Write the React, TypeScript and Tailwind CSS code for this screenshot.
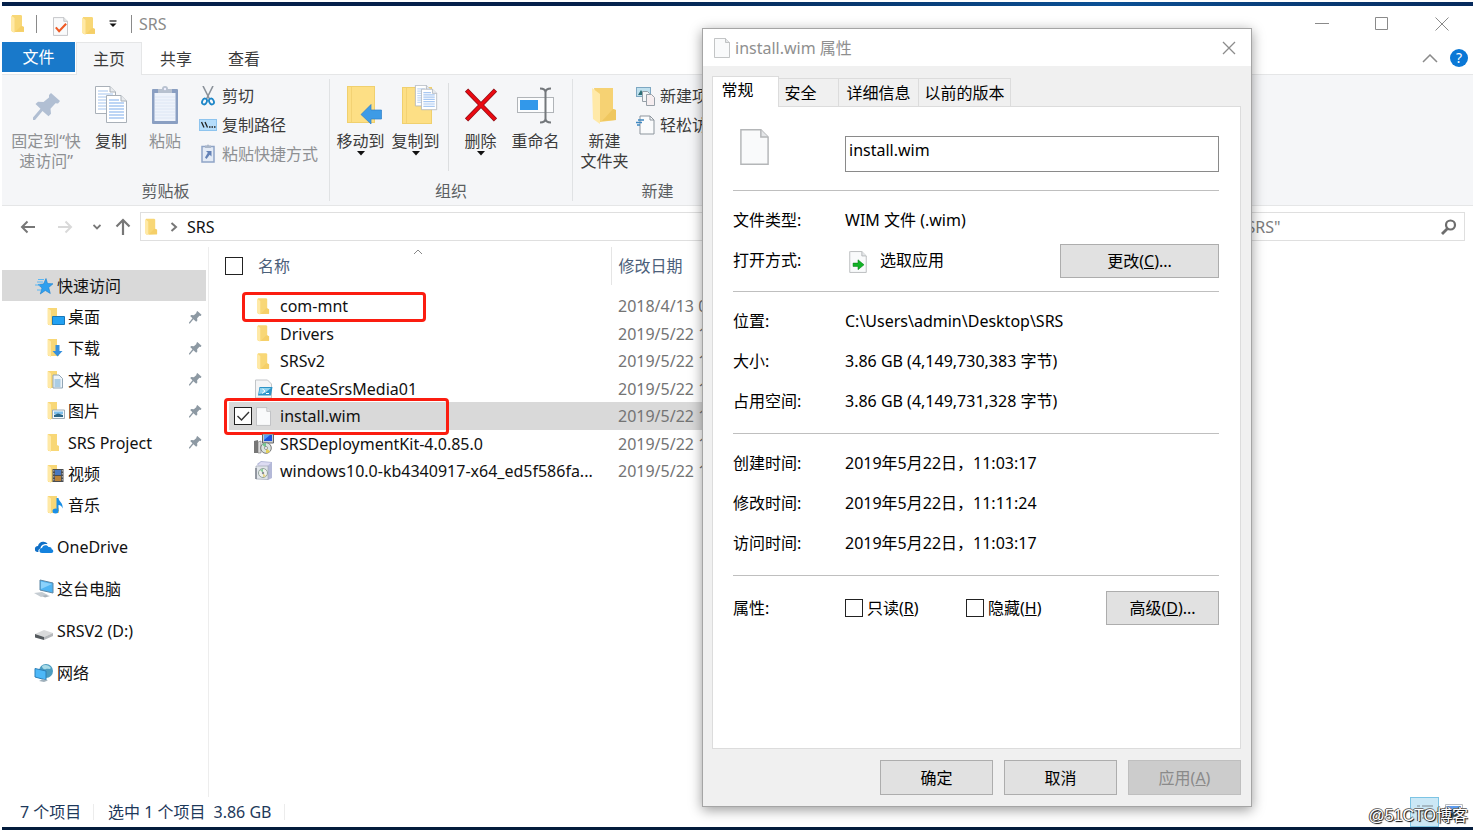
import React from "react";

type P = { className?: string; children?: React.ReactNode };

function Folder({ className = "" }: { className?: string }) {
  return (
    <svg className={className} viewBox="0 0 14 18" aria-hidden="true">
      <path d="M1 0h9l1 .8V11l2 1v5H1z" fill="#f8d776" />
      <path d="M10 11l3 1v4.500l-9 .5z" fill="#f5cf68" />
      <path d="M0 .5l3.500 2.500V18L0 16z" fill="#ffe9a6" />
    </svg>
  );
}

function Page({ className = "", children }: P) {
  return (
    <svg className={className} viewBox="0 0 16 20" aria-hidden="true">
      <path d="M1 .5h10.500L15.500 4.500V19.500H.5V.5z" fill="#f9fafb" stroke="#b4b6b8" strokeWidth=".8" />
      <path d="M11.500.5v4h4" fill="#e4e6e8" stroke="#b4b6b8" strokeWidth=".8" />
      {children}
    </svg>
  );
}

function Pin({ className = "" }: { className?: string }) {
  return (
    <svg className={className} viewBox="0 0 28 28" aria-hidden="true">
      <path
        d="M18 0l9 8-2 2.500-2.500-.3-5 5.500.5 5-2.500 2.500-6-5.200L2 27H0v-2.500l7.500-8.800L2.500 11 5 8.800l5.500.2L16 4.500 16 2z"
        fill="currentColor"
      />
    </svg>
  );
}

function Doc({ x, y, c }: { x: number; y: number; c: string }) {
  return (
    <g transform={`translate(${x} ${y})`}>
      <path d="M.5.5H15L20.500 6V27.500H.5z" fill="#fff" stroke="#a9b0b8" />
      <path d="M3 5h10M3 8h15M3 11h15M3 14h15M3 17h15M3 20h15M3 23h15" stroke={c} strokeWidth="1.600" />
      <path d="M15 .5V6h5.500" fill="#e8ebee" stroke="#a9b0b8" />
    </g>
  );
}

function CopyIcon() {
  return (
    <svg className="h-10 w-8" viewBox="0 0 32 38" aria-hidden="true">
      <Doc x={0} y={0} c="#c3d9f5" />
      <Doc x={11} y={9} c="#a8c8f2" />
    </svg>
  );
}

function PasteIcon() {
  return (
    <svg className="h-10 w-7" viewBox="0 0 28 40" aria-hidden="true">
      <rect x="1" y="4" width="26" height="35" rx="1" fill="#8a9fc2" />
      <rect x="3.500" y="8" width="21" height="28" fill="#eef3fb" />
      <path d="M4 12h20M4 15h20M4 18h20M4 21h20M4 24h20M4 27h20M4 30h20M4 33h20" stroke="#dde6f4" />
      <path d="M7 4h4a3 3 0 0 1 6 0h4v4H7z" fill="#b7c1cf" />
      <circle cx="14" cy="4" r="1.200" fill="#eef" />
    </svg>
  );
}

function ScissorsIcon() {
  return (
    <svg className="h-5 w-4" viewBox="0 0 14 20" aria-hidden="true">
      <path d="M2 0l6.500 13M12 0L5.500 13" stroke="#8b929a" strokeWidth="1.600" fill="none" />
      <ellipse cx="3.500" cy="15.500" rx="2.300" ry="3" fill="none" stroke="#1d86c8" strokeWidth="1.800" transform="rotate(25 3.500 15.500)" />
      <ellipse cx="10.500" cy="15.500" rx="2.300" ry="3" fill="none" stroke="#1d86c8" strokeWidth="1.800" transform="rotate(-25 10.500 15.500)" />
    </svg>
  );
}

function PathIcon() {
  return (
    <svg className="h-3 w-[18px]" viewBox="0 0 18 12" aria-hidden="true">
      <rect x=".5" y=".5" width="17" height="11" fill="#b5dcfb" stroke="#8ec4ee" />
      <path d="M2.500 3l2.500 5.500M6 3l2.500 5.500" stroke="#222" strokeWidth="1.300" />
      <path d="M10 8h1.500M12.500 8H14M15 8h1.500" stroke="#222" strokeWidth="1.500" />
    </svg>
  );
}

function ShortcutIcon() {
  return (
    <svg className="h-[19px] w-4" viewBox="0 0 16 19" aria-hidden="true">
      <rect x="2" y="2.500" width="12" height="15.500" fill="#e4ebf6" stroke="#8fa4c6" strokeWidth="1.500" />
      <path d="M5 3V1.500h2a1 1 0 0 1 2 0h2V4H5z" fill="#a9b6c9" />
      <path d="M6 7h5.500v5.500L9.700 10.700 6.500 15 5 13.500 7.800 8.800z" fill="#6482b6" />
    </svg>
  );
}

function MoveToIcon() {
  return (
    <svg className="h-10 w-9" viewBox="0 0 36 40" aria-hidden="true">
      <rect x="0.500" y="1.500" width="27" height="36" fill="#fddf85" stroke="#f0d06e" />
      <path d="M4.500 2v35" stroke="#f3d273" />
      <path d="M14 29.500L24 19.500v5.500h10.500v9H24V39z" fill="#3e9be6" stroke="#2f80c8" strokeWidth=".7" />
    </svg>
  );
}

function CopyToIcon() {
  return (
    <svg className="h-10 w-9" viewBox="0 0 36 40" aria-hidden="true">
      <rect x="0.500" y="2.500" width="29" height="36" fill="#fddf85" stroke="#f0d06e" />
      <path d="M4.500 3v35" stroke="#f3d273" />
      <g transform="translate(13 0) scale(.76)">
        <Doc x={0} y={0} c="#c3d9f5" />
        <Doc x={8} y={5} c="#a8c8f2" />
      </g>
    </svg>
  );
}

function DeleteIcon() {
  return (
    <svg className="h-10 w-8" viewBox="0 0 32 40" aria-hidden="true">
      <path d="M1.500 5L30.500 35M30.500 5L1.500 35" stroke="#8f1018" strokeWidth="4.600" />
      <path d="M2 5.500l28 29M30 5.500l-28 29" stroke="#ea0a12" strokeWidth="3.200" />
    </svg>
  );
}

function RenameIcon() {
  return (
    <svg className="h-10 w-[38px]" viewBox="0 0 38 40" aria-hidden="true">
      <rect x=".5" y="12.500" width="36" height="15" fill="#fbfcfd" stroke="#b0b4b8" />
      <rect x="3" y="15" width="18" height="10" fill="#3298ea" />
      <path d="M23 3.500c4 0 5.500 1 5.500 4v26c0 3-1.500 4-5.500 4M34 3.500c-4 0-5.500 1-5.500 4v26c0 3 1.500 4 5.500 4" fill="none" stroke="#73777b" strokeWidth="2" />
    </svg>
  );
}

function NewFolderIcon() {
  return (
    <svg className="h-10 w-7" viewBox="0 0 28 40" aria-hidden="true">
      <path d="M3 3h19v21l3 1v10l-16 2z" fill="#f6d273" />
      <path d="M22 24l3 1v10l-14 1z" fill="#efc75f" />
      <path d="M1 3l8 6v30l-7-5z" fill="#ffe9a8" />
    </svg>
  );
}

function NewItemIcon() {
  return (
    <svg className="h-5 w-5" viewBox="0 0 20 20" aria-hidden="true">
      <rect x=".5" y="1.500" width="14" height="9" fill="#bfe0ee" stroke="#7da7c2" />
      <path d="M2 9l3-5 3 5z" fill="#2d6f78" />
      <path d="M6.500 5.500h5l2 2v8h-7z" fill="#f4f6f8" stroke="#97a0a8" />
      <path d="M10.500 8.500h5l3 3v8h-8z" fill="#f6eef0" stroke="#97a0a8" />
    </svg>
  );
}

function EasyAccessIcon() {
  return (
    <svg className="h-5 w-5" viewBox="0 0 20 20" aria-hidden="true">
      <path d="M4 1h10l4 4v14H4z" fill="#fafbfc" stroke="#8d959d" />
      <path d="M14 1v4h4" fill="none" stroke="#8d959d" />
      <path d="M2 5h6M0 7.500h6M1 10h3" stroke="#3d86c0" strokeWidth="1.500" />
    </svg>
  );
}

const svgBox = "h-5 w-5 shrink-0";

function NavIcon({ kind }: { kind: string }) {
  if (kind === "star")
    return (
      <svg className={svgBox} viewBox="0 0 20 20" aria-hidden="true">
        <path d="M12 2.500l1.500 5 5.500.3-4.300 3.700 1.600 6-5-3-5 3.500L8 12 4 8.500l5.500-.5z" fill="#2fa0ef" stroke="#1b80cf" strokeWidth=".6" />
        <path d="M4 3.500h6M3 6h6M1 9h5M3 14h4" stroke="#5bb8f5" strokeWidth="1" />
      </svg>
    );
  if (kind === "cloud")
    return (
      <svg className={svgBox} viewBox="0 0 20 20" aria-hidden="true">
        <path d="M1 13c-.5-3 1-4 3-4 .5-3 3.500-5 6.500-4C12 5 13 6 13.500 7c-5-.5-7 2-7 4.500-2 .5-2.500 2-2 3.500C2.500 15 1 14.500 1 13z" fill="#0f6fc6" />
        <path d="M5.500 14c-.3-2 1-3 2.500-3 .5-3 5-4 6.500-1 2.500-.3 3.300 1 3.200 2.300 2.300.5 2 3.700-.2 3.700H8c-1.500 0-2.500-.8-2.500-2z" fill="#1482de" />
      </svg>
    );
  if (kind === "pc")
    return (
      <svg className={svgBox} viewBox="0 0 20 20" aria-hidden="true">
        <path d="M6 1l13 3v10L6 11z" fill="#4fb4f2" stroke="#5d87a5" />
        <path d="M7 2.500l11 2.500-11 5z" fill="#8bd2fb" />
        <path d="M0 14l8-1 6 3-7 2z" fill="#c5ccd2" />
        <path d="M8 17l4-1 4 1-5 1.500z" fill="#a9b2ba" />
      </svg>
    );
  if (kind === "drive")
    return (
      <svg className={svgBox} viewBox="0 0 20 20" aria-hidden="true">
        <path d="M1 13l9-4 9 3-9 4z" fill="#d9dadb" />
        <path d="M1 13l9 3v3l-9-2.500z" fill="#555a5e" />
        <path d="M10 16l9-4v3l-9 4z" fill="#b5b8bb" />
      </svg>
    );
  if (kind === "network")
    return (
      <svg className={svgBox} viewBox="0 0 20 20" aria-hidden="true">
        <circle cx="12" cy="8" r="7" fill="#4b9cc0" />
        <path d="M8 3c3-2 7-1 9 2-2 2-3 0-5 1S8 5 8 3z" fill="#a8dbe8" />
        <path d="M1 5.500l11 2.500v9L1 14z" fill="#4db8f8" stroke="#2b7fb8" />
        <path d="M5 18l4-2 5 1.500-4 1.500z" fill="#9fb0bb" />
      </svg>
    );
  return (
    <svg className={svgBox} viewBox="0 0 20 20" aria-hidden="true">
      <path d="M3 1h9v11l2 1v5H3z" fill="#f8d776" />
      <path d="M2.500 1L6 3.500V19l-3.500-2z" fill="#ffe9a6" />
      {kind === "desktop" && <path d="M7.500 9.500h12v8h-12z" fill="#23a1f2" stroke="#1877b8" />}
      {kind === "download" && <path d="M10.500 7h4v6h3L12.500 18.500 7.500 13h3z" fill="#3590dd" />}
      {kind === "docs" && (
        <>
          <path d="M8 5h6l3.500 3.500V18H8z" fill="#eef4f9" stroke="#91a5b5" />
          <path d="M9.500 10h6M9.500 12h6M9.500 14h6M9.500 16h6" stroke="#68a5cf" />
        </>
      )}
      {kind === "pics" && (
        <>
          <path d="M7.500 9h12v8.500h-12z" fill="#f5fafc" stroke="#a0acb5" />
          <path d="M9 10.500h9V13H9z" fill="#7fc0ec" />
          <path d="M9 16v-2l4-1.500 5 1.500v2z" fill="#2b6687" />
        </>
      )}
      {kind === "video" && (
        <>
          <path d="M7.500 5h11v13h-11z" fill="#4a4d50" />
          <path d="M10 6h6v5h-6z" fill="#4878c0" />
          <path d="M10 12h6v5h-6z" fill="#b98238" />
          <path d="M8.800 6v12M17.300 6v12" stroke="#bbb" strokeDasharray="1.500 1.500" />
        </>
      )}
      {kind === "music" && (
        <>
          <path d="M11.500 3h2c0 3.500 5 4.500 4 10.500-.5-2-2-3.500-4-3.500V16h-2z" fill="#1a8fe6" />
          <ellipse cx="10.500" cy="16" rx="3" ry="2.500" fill="#1a8fe6" />
        </>
      )}
    </svg>
  );
}

function FileIcon({ kind }: { kind: string }) {
  if (kind === "folder") return <Folder className="ml-[3px] h-[17px] w-[13px]" />;
  if (kind === "page") return <Page className="ml-0.5 h-[19px] w-[15px]" />;
  if (kind === "script")
    return (
      <svg className="h-5 w-5" viewBox="0 0 20 20" aria-hidden="true">
        <path d="M1.500 1h12l4 4v14h-16z" fill="#f4f5f6" stroke="#c2c5c8" />
        <path d="M5.500 8h13l-1.500 8.500H4z" fill="#2d93c6" />
        <path d="M6 9h11l-6 5-6 1z" fill="#8fd3ee" />
        <path d="M8.500 10l2.500 2-3 2.500M12 14.500h3" stroke="#fff" fill="none" />
      </svg>
    );
  if (kind === "installer")
    return (
      <svg className="h-5 w-5" viewBox="0 0 20 20" aria-hidden="true">
        <path d="M8.500 0h11v9h-11z" fill="#c6cbd0" stroke="#666" />
        <path d="M10 1h8v6h-8z" fill="#1b52dd" />
        <path d="M10 1h6l-6 5z" fill="#54a0ff" />
        <path d="M0 7l4-1v13H0z" fill="#777" />
        <path d="M4 8l3-1v12H4z" fill="#ddd" stroke="#777" strokeWidth=".6" />
        <circle cx="12" cy="14" r="5.300" fill="#dbe4df" stroke="#777" />
        <path d="M12 14L8 10.500A5 5 0 0 1 12 9z" fill="#74c58f" />
        <path d="M12 14l4 3.500A5 5 0 0 1 12 19z" fill="#e4cf58" />
        <circle cx="12" cy="14" r="1.500" fill="#fff" stroke="#777" strokeWidth=".7" />
      </svg>
    );
  return (
    <svg className="h-5 w-5" viewBox="0 0 20 20" aria-hidden="true">
      <path d="M3 3l4-3 11 1v16l-4 2z" fill="#b4b9d8" />
      <path d="M7 1l10 .8-3.500 3.200H3z" fill="#dddcf2" />
      <path d="M2 5h12v13.500L2 18z" fill="#e1e5ea" stroke="#a0a6b4" strokeWidth=".7" />
      <circle cx="9" cy="12" r="4.500" fill="#f0f2ee" stroke="#93a39c" />
      <path d="M9 12L6 9a4 4 0 0 1 3-1z" fill="#8ccc9a" />
      <path d="M9 12l3 3a4 4 0 0 1-3 1z" fill="#e6d58a" />
      <circle cx="9" cy="12" r="1.200" fill="#8a8f94" />
      <path d="M2 7v11" stroke="#7d838c" strokeWidth="1.500" />
    </svg>
  );
}

function BigButton({ icon, lines, width, dim, drop }: { icon: React.ReactNode; lines: string[]; width: string; dim?: boolean; drop?: boolean }) {
  return (
    <button className={`flex flex-col items-center whitespace-nowrap ${width} ${dim ? "text-[#8e9093]" : "text-[#3b3b3b]"}`}>
      <span className="flex h-[52px] items-center justify-center">{icon}</span>
      <span className="block leading-5">
        {lines.map((l) => (
          <span key={l} className="block">
            {l}
          </span>
        ))}
      </span>
      {drop && (
        <svg className="h-[5px] w-2" viewBox="0 0 8 5" aria-hidden="true">
          <path d="M0 0h8L4 4.500z" fill="#111" />
        </svg>
      )}
    </button>
  );
}

function SmallButton({ icon, label, dim }: { icon: React.ReactNode; label: string; dim?: boolean }) {
  return (
    <button className={`flex h-[29px] items-center gap-1 whitespace-nowrap ${dim ? "text-[#8e9093]" : "text-[#3b3b3b]"}`}>
      <span className="flex w-5 justify-center">{icon}</span>
      {label}
    </button>
  );
}

function Group({ label, className = "", children }: { label: string; className?: string; children: React.ReactNode }) {
  return (
    <section aria-label={label} className={`my-1 flex shrink-0 flex-col border-r border-[#e0e2e4] ${className}`}>
      <div className="flex flex-1 items-start">{children}</div>
      <div className="text-center leading-5 text-[#5b5e61]">{label}</div>
    </section>
  );
}

const quick = [
  { label: "桌面", kind: "desktop", pin: true },
  { label: "下载", kind: "download", pin: true },
  { label: "文档", kind: "docs", pin: true },
  { label: "图片", kind: "pics", pin: true },
  { label: "SRS Project", kind: "folder", pin: true },
  { label: "视频", kind: "video", pin: false },
  { label: "音乐", kind: "music", pin: false },
];

const roots = [
  { label: "OneDrive", kind: "cloud" },
  { label: "这台电脑", kind: "pc" },
  { label: "SRSV2 (D:)", kind: "drive" },
  { label: "网络", kind: "network" },
];

const files = [
  { name: "com-mnt", date: "2018/4/13 0", kind: "folder", mark: true },
  { name: "Drivers", date: "2019/5/22 1", kind: "folder" },
  { name: "SRSv2", date: "2019/5/22 1", kind: "folder" },
  { name: "CreateSrsMedia01", date: "2019/5/22 1", kind: "script" },
  { name: "install.wim", date: "2019/5/22 1", kind: "page", selected: true },
  { name: "SRSDeploymentKit-4.0.85.0", date: "2019/5/22 1", kind: "installer" },
  { name: "windows10.0-kb4340917-x64_ed5f586fa...", date: "2019/5/22 1", kind: "update" },
];

const checkboxBase = "block h-[18px] w-[18px] shrink-0 appearance-none border border-[#222] bg-white";

function Row({ label, children }: { label: string; children: React.ReactNode }) {
  return (
    <div className="flex h-10 items-center">
      <dt className="w-28 shrink-0">{label}</dt>
      <dd className="flex flex-1 items-center">{children}</dd>
    </div>
  );
}

const dlgButton = "border border-[#adadad] bg-[#e1e1e1] text-black";

function PropertiesDialog() {
  return (
    <div
      role="dialog"
      aria-label="install.wim 属性"
      className="absolute left-[702px] top-7 flex w-[550px] flex-col border border-[#a5a5a5] bg-[#f0f0f0] text-black shadow-[0_3px_12px_rgba(0,0,0,0.4)]"
    >
      <header className="flex h-[37px] items-center bg-white pl-[11px] pr-[13px] text-[#8f8f8f]">
        <Page className="h-5 w-4" />
        <h2 className="ml-[5px] flex-1">install.wim 属性</h2>
        <button aria-label="关闭" className="p-px">
          <svg className="h-4 w-4" viewBox="0 0 16 16" aria-hidden="true">
            <path d="M2 2l12 12M14 2L2 14" stroke="#8c8c8c" strokeWidth="1.300" />
          </svg>
        </button>
      </header>
      <div className="pl-[9px] pr-[10px] pt-[11px]">
        <div role="tablist" className="flex h-[29px] items-end">
          <button role="tab" aria-selected="true" className="relative -mb-px h-[31px] w-[67px] border border-b-0 border-[#dcdcdc] bg-white pb-1 pr-4 text-center">
            常规
          </button>
          <button role="tab" aria-selected="false" className="h-7 w-[60px] border-r border-t border-[#dcdcdc] pr-4 text-center">
            安全
          </button>
          <button role="tab" aria-selected="false" className="h-7 w-20 border-r border-t border-[#dcdcdc] text-center">
            详细信息
          </button>
          <button role="tab" aria-selected="false" className="h-7 w-[92px] border-r border-t border-[#dcdcdc] text-center">
            以前的版本
          </button>
        </div>
        <div role="tabpanel" className="h-[643px] border border-[#dcdcdc] bg-white pl-5 pr-[21px]">
          <div className="flex h-[83px] items-start">
            <div className="w-28 pl-[7px] pt-[21px]">
              <Page className="h-[38px] w-[29px]" />
            </div>
            <input
              aria-label="文件名"
              defaultValue="install.wim"
              className="mt-[29px] h-9 flex-1 border border-[#8a8a8a] bg-white pb-2 pl-[3px] outline-none"
            />
          </div>
          <dl className="border-t border-[#bfbfbf] pb-[11px] pt-[9px]">
            <Row label="文件类型:">WIM 文件 (.wim)</Row>
            <Row label="打开方式:">
              <Page className="ml-1 mt-1 h-[22px] w-[18px]">
                <path d="M3.500 11h4.500V8l5.500 4.500L8 17v-3H3.500z" fill="#12b426" stroke="#0a7d18" strokeWidth=".5" />
              </Page>
              <span className="ml-[13px] flex-1">选取应用</span>
              <button className={`mt-0.5 h-[34px] w-[159px] ${dlgButton}`}>
                更改(<u>C</u>)...
              </button>
            </Row>
          </dl>
          <dl className="border-t border-[#bfbfbf] pb-3 pt-[9px]">
            <Row label="位置:">C:\Users\admin\Desktop\SRS</Row>
            <Row label="大小:">3.86 GB (4,149,730,383 字节)</Row>
            <Row label="占用空间:">3.86 GB (4,149,731,328 字节)</Row>
          </dl>
          <dl className="border-t border-[#bfbfbf] pb-3 pt-[9px]">
            <Row label="创建时间:">2019年5月22日，11:03:17</Row>
            <Row label="修改时间:">2019年5月22日，11:11:24</Row>
            <Row label="访问时间:">2019年5月22日，11:03:17</Row>
          </dl>
          <dl className="border-t border-[#bfbfbf] pt-3">
            <Row label="属性:">
              <label className="flex w-[121px] items-center gap-1">
                <input type="checkbox" className={checkboxBase} />
                <span>
                  只读(<u>R</u>)
                </span>
              </label>
              <label className="flex flex-1 items-center gap-1">
                <input type="checkbox" className={checkboxBase} />
                <span>
                  隐藏(<u>H</u>)
                </span>
              </label>
              <button className={`h-[34px] w-[113px] ${dlgButton}`}>
                高级(<u>D</u>)...
              </button>
            </Row>
          </dl>
        </div>
      </div>
      <footer className="flex justify-end gap-[11px] px-[10px] pb-[11px] pt-[11px]">
        <button className={`h-[35px] w-[113px] ${dlgButton}`}>确定</button>
        <button className={`h-[35px] w-[113px] ${dlgButton}`}>取消</button>
        <button disabled className="h-[35px] w-[113px] border border-[#bfbfbf] bg-[#cccccc] text-[#8a8a8a]">
          应用(<u>A</u>)
        </button>
      </footer>
    </div>
  );
}

export default function App() {
  return (
    <div className="relative flex min-h-screen flex-col bg-white pb-1 pl-0.5 pr-[5px] pt-0.5 font-['Noto_Sans','Noto_Sans_CJK_SC',sans-serif] text-[16px] leading-6 text-[#111]">
      <div className="h-1 bg-linear-to-r from-[#04204a] from-40% via-[#0b5095] via-75% to-[#062a5c]" />
      <header className="flex h-9 items-center">
        <Folder className="ml-[9px] h-[18px] w-[14px]" />
        <span className="ml-[11px] h-[18px] w-px bg-[#8a8a8a]" />
        <Page className="ml-4 mt-1 h-[19px] w-[15px]">
          <path d="M3 11l3.500 4L14 7" fill="none" stroke="#ee5a24" strokeWidth="2.200" />
        </Page>
        <Folder className="ml-[14px] mt-1 h-[18px] w-[14px]" />
        <button aria-label="自定义快速访问工具栏" className="ml-[13px]">
          <svg className="h-2 w-2" viewBox="0 0 8 8" aria-hidden="true">
            <path d="M.5 1h7" stroke="#222" strokeWidth="1.300" />
            <path d="M.5 3.500h7L4 7z" fill="#111" />
          </svg>
        </button>
        <span className="ml-[14px] h-[18px] w-px bg-[#8a8a8a]" />
        <h1 className="ml-[7px] flex-1 text-[#8a8a8a]">SRS</h1>
        <div className="flex items-center gap-[46px] pr-6">
          <button aria-label="最小化">
            <svg className="h-[14px] w-[14px]" viewBox="0 0 14 14" aria-hidden="true">
              <path d="M0 6.500h14" stroke="#8a8a8a" />
            </svg>
          </button>
          <button aria-label="最大化">
            <svg className="h-[14px] w-[14px]" viewBox="0 0 14 14" aria-hidden="true">
              <path d="M.5.500h12v12H.5z" fill="none" stroke="#8a8a8a" />
            </svg>
          </button>
          <button aria-label="关闭">
            <svg className="h-[14px] w-[14px]" viewBox="0 0 14 14" aria-hidden="true">
              <path d="M.5.500l13 13M13.500.500l-13 13" stroke="#8a8a8a" />
            </svg>
          </button>
        </div>
      </header>

      <div role="tablist" className="relative flex h-8 items-stretch text-[#3b3b3b]">
        <button role="tab" aria-selected="false" className="mb-0.5 w-[73px] bg-[#1979ca] text-white">
          文件
        </button>
        <button role="tab" aria-selected="true" className="-mb-px ml-px w-[66px] border border-b-0 border-[#e5e6e7] bg-[#f5f6f8]">
          主页
        </button>
        <button role="tab" aria-selected="false" className="w-[68px] pt-0.5">
          共享
        </button>
        <button role="tab" aria-selected="false" className="w-[68px] pt-0.5">
          查看
        </button>
        <div className="ml-auto flex items-center gap-3 pr-[5px]">
          <button aria-label="折叠功能区">
            <svg className="h-[9px] w-4" viewBox="0 0 16 9" aria-hidden="true">
              <path d="M1 8l7-7 7 7" fill="none" stroke="#8a8a8a" strokeWidth="1.500" />
            </svg>
          </button>
          <button className="h-[18px] w-[18px] rounded-full bg-[#0a78d6] text-[14px] leading-[18px] text-white">?</button>
        </div>
      </div>

      <div className="flex h-[132px] overflow-hidden border-y border-[#e5e6e7] bg-[#f5f6f8]">
        <Group label="剪贴板" className="w-[328px]">
          <BigButton width="w-[88px]" dim icon={<Pin className="ml-0.5 mt-1 h-7 w-7 text-[#b1bfd3]" />} lines={["固定到“快", "速访问”"]} />
          <BigButton width="w-[42px]" icon={<CopyIcon />} lines={["复制"]} />
          <BigButton width="w-[66px]" dim icon={<PasteIcon />} lines={["粘贴"]} />
          <div className="pt-0.5">
            <SmallButton icon={<ScissorsIcon />} label="剪切" />
            <SmallButton icon={<PathIcon />} label="复制路径" />
            <SmallButton dim icon={<ShortcutIcon />} label="粘贴快捷方式" />
          </div>
        </Group>
        <Group label="组织" className="w-[243px]">
          <BigButton width="ml-[3px] w-[55px]" drop icon={<span className="pl-2"><MoveToIcon /></span>} lines={["移动到"]} />
          <BigButton width="w-[55px]" drop icon={<span className="pl-2"><CopyToIcon /></span>} lines={["复制到"]} />
          <div className="ml-[5px] mt-1 h-[88px] w-px bg-[#dcdee0]" />
          <BigButton width="ml-1 w-[55px]" drop icon={<DeleteIcon />} lines={["删除"]} />
          <BigButton width="w-[55px]" icon={<RenameIcon />} lines={["重命名"]} />
        </Group>
        <Group label="新建" className="w-[170px]">
          <BigButton width="w-[63px]" icon={<NewFolderIcon />} lines={["新建", "文件夹"]} />
          <div className="pt-0.5">
            <SmallButton icon={<NewItemIcon />} label="新建项目" />
            <SmallButton icon={<EasyAccessIcon />} label="轻松访问" />
          </div>
        </Group>
      </div>

      <div className="flex h-[41px] items-center pr-2">
        <div className="flex w-[138px] shrink-0 items-center pl-[18px] text-[#7b7b7b]">
          <button aria-label="后退">
            <svg className="h-4 w-4" viewBox="0 0 16 16" aria-hidden="true">
              <path d="M15 8H2M7.500 2.500L2 8l5.500 5.500" fill="none" stroke="#777" strokeWidth="2" />
            </svg>
          </button>
          <button aria-label="前进" className="ml-[21px]">
            <svg className="h-4 w-4" viewBox="0 0 16 16" aria-hidden="true">
              <path d="M1 8h13M8.500 2.500L14 8l-5.500 5.500" fill="none" stroke="#d9d9d9" strokeWidth="2" />
            </svg>
          </button>
          <button aria-label="最近位置" className="ml-5">
            <svg className="h-2 w-2" viewBox="0 0 8 8" aria-hidden="true">
              <path d="M.5 2L4 5.500 7.500 2" fill="none" stroke="#777" strokeWidth="1.800" />
            </svg>
          </button>
          <button aria-label="上移" className="ml-[14px]">
            <svg className="h-[18px] w-4" viewBox="0 0 16 18" aria-hidden="true">
              <path d="M8 17V2M1.500 8.500L8 2l6.500 6.500" fill="none" stroke="#777" strokeWidth="2.200" />
            </svg>
          </button>
        </div>
        <div className="flex h-[29px] flex-1 items-center border border-[#dfdfdf] pl-1">
          <Folder className="h-[18px] w-[13px]" />
          <svg className="ml-3 h-[10px] w-2" viewBox="0 0 8 10" aria-hidden="true">
            <path d="M1.500 1L6 5 1.500 9" fill="none" stroke="#777" strokeWidth="2" />
          </svg>
          <span className="ml-[9px]">SRS</span>
        </div>
        <div className="ml-3 flex h-[29px] w-[270px] items-center border border-[#dfdfdf] pr-[7px]">
          <input aria-label="搜索" placeholder={'搜索"SRS"'} className="w-full min-w-0 flex-1 pl-3 outline-none placeholder:text-[#7b7b7b]" />
          <svg className="h-4 w-4 shrink-0" viewBox="0 0 16 16" aria-hidden="true">
            <circle cx="9.500" cy="6" r="4.500" fill="none" stroke="#6d6d6d" strokeWidth="2.200" />
            <path d="M6.500 9.500L1 15" stroke="#6d6d6d" strokeWidth="2.800" />
          </svg>
        </div>
      </div>

      <div className="flex flex-1">
        <nav aria-label="导航窗格" className="w-[207px] shrink-0 border-r border-[#ededed] pt-[23px]">
          <ul className="grid h-[251px] auto-rows-fr">
            <li className="mr-0.5 flex items-center bg-[#d9d9d9] pl-8">
              <a href="#quick" className="flex items-center gap-[3px]">
                <NavIcon kind="star" />
                快速访问
              </a>
            </li>
            {quick.map((q) => (
              <li key={q.label} className="flex items-center justify-between pl-[43px] pr-1.5">
                <a href={`#${q.kind}`} className="flex items-center gap-[3px]">
                  <NavIcon kind={q.kind} />
                  {q.label}
                </a>
                {q.pin && <Pin className="h-[13px] w-[13px] text-[#8d99a3]" />}
              </li>
            ))}
          </ul>
          <ul className="mt-[5px]">
            {roots.map((r) => (
              <li key={r.label} className="flex h-[42px] items-center pl-8">
                <a href={`#${r.kind}`} className="flex items-center gap-[3px]">
                  <NavIcon kind={r.kind} />
                  {r.label}
                </a>
              </li>
            ))}
          </ul>
        </nav>

        <main className="flex-1 overflow-hidden pl-5">
          <div className="relative">
            <svg className="absolute left-[184px] top-0.5 h-[6px] w-[10px]" viewBox="0 0 10 6" aria-hidden="true">
              <path d="M1 5l4-4 4 4" fill="none" stroke="#888" />
            </svg>
          </div>
          <table className="w-[620px] table-fixed border-collapse text-left">
            <thead>
              <tr className="h-[38px] text-[#4c607a]">
                <th className="w-[382px] border-r border-[#e5e5e5] p-0 font-normal">
                  <label className="flex items-center gap-[15px]">
                    <input type="checkbox" aria-label="全选" className={`-ml-1 ${checkboxBase}`} />
                    <span>名称</span>
                  </label>
                </th>
                <th className="p-0 pl-[7px] font-normal">修改日期</th>
              </tr>
              <tr className="h-[7px]" aria-hidden="true" />
            </thead>
            <tbody>
              {files.map((f) => (
                <tr key={f.name} className={`odd:h-7 even:h-[27px] ${f.selected ? "bg-[#d9d9d9]" : ""}`}>
                  <td className="relative p-0">
                    {f.mark && <span className="pointer-events-none absolute left-[13px] top-0 h-[30px] w-[184px] rounded border-[3px] border-[#fb1d10]" />}
                    {f.selected && <span className="pointer-events-none absolute -left-[5px] -top-1 h-[37px] w-[225px] rounded border-[3px] border-[#fb1d10]" />}
                    <div className="flex items-center">
                      <span className="flex w-[25px] items-center pl-[5px]">
                        {f.selected && (
                          <span className="relative">
                            <input type="checkbox" defaultChecked aria-label={f.name} className={checkboxBase} />
                            <svg className="pointer-events-none absolute inset-0 h-[18px] w-[18px]" viewBox="0 0 18 18" aria-hidden="true">
                              <path d="M3.500 9l4 4 7.500-8" fill="none" stroke="#333" strokeWidth="1.400" />
                            </svg>
                          </span>
                        )}
                      </span>
                      <span className="flex w-[26px] items-center">
                        <FileIcon kind={f.kind} />
                      </span>
                      <span className="whitespace-nowrap">{f.name}</span>
                    </div>
                  </td>
                  <td className="whitespace-nowrap p-0 pl-[7px] text-[#747474]">{f.date}</td>
                </tr>
              ))}
            </tbody>
          </table>
        </main>
      </div>

      <footer className="flex h-[30px] items-center text-[#1e395b]">
        <span className="w-[92px] border-r border-[#ececec] pl-[18px] leading-4">7 个项目</span>
        <span className="flex w-[191px] gap-2 whitespace-nowrap border-r border-[#ececec] pl-[14px] leading-4">
          <span>选中 1 个项目</span>
          <span>3.86 GB</span>
        </span>
        <div className="ml-auto flex items-center gap-[6px] pr-[10px]">
          <button aria-label="详细信息视图" className="flex h-[30px] w-[29px] items-center justify-center border border-[#7cc4e4] bg-[#cbe8f6]">
            <svg className="h-4 w-4" viewBox="0 0 16 16" aria-hidden="true">
              <path d="M0 2h3M5 2h11M0 6h3M5 6h11M0 10h3M5 10h11M0 14h3M5 14h11" stroke="#9aa9b3" strokeWidth="1.500" />
            </svg>
          </button>
          <button aria-label="缩略图视图">
            <svg className="h-4 w-[18px]" viewBox="0 0 18 16" aria-hidden="true">
              <path d="M.5.500h17v15H.5z" fill="#fff" stroke="#b8bcc0" />
              <path d="M2 2h14v8H2z" fill="#5b9bef" />
              <path d="M2 14l6-6 8 6z" fill="#2c4a5f" />
            </svg>
          </button>
        </div>
      </footer>
      <div className="h-[3px] bg-[#041c3c]" />

      <PropertiesDialog />
      <div className="absolute bottom-[6px] right-[10px] font-['Liberation_Sans','Noto_Sans_CJK_SC',sans-serif] text-white [text-shadow:1px_1px_1px_#000,-1px_0_0_#444,0_-1px_0_#777]">@51CTO博客</div>
    </div>
  );
}
